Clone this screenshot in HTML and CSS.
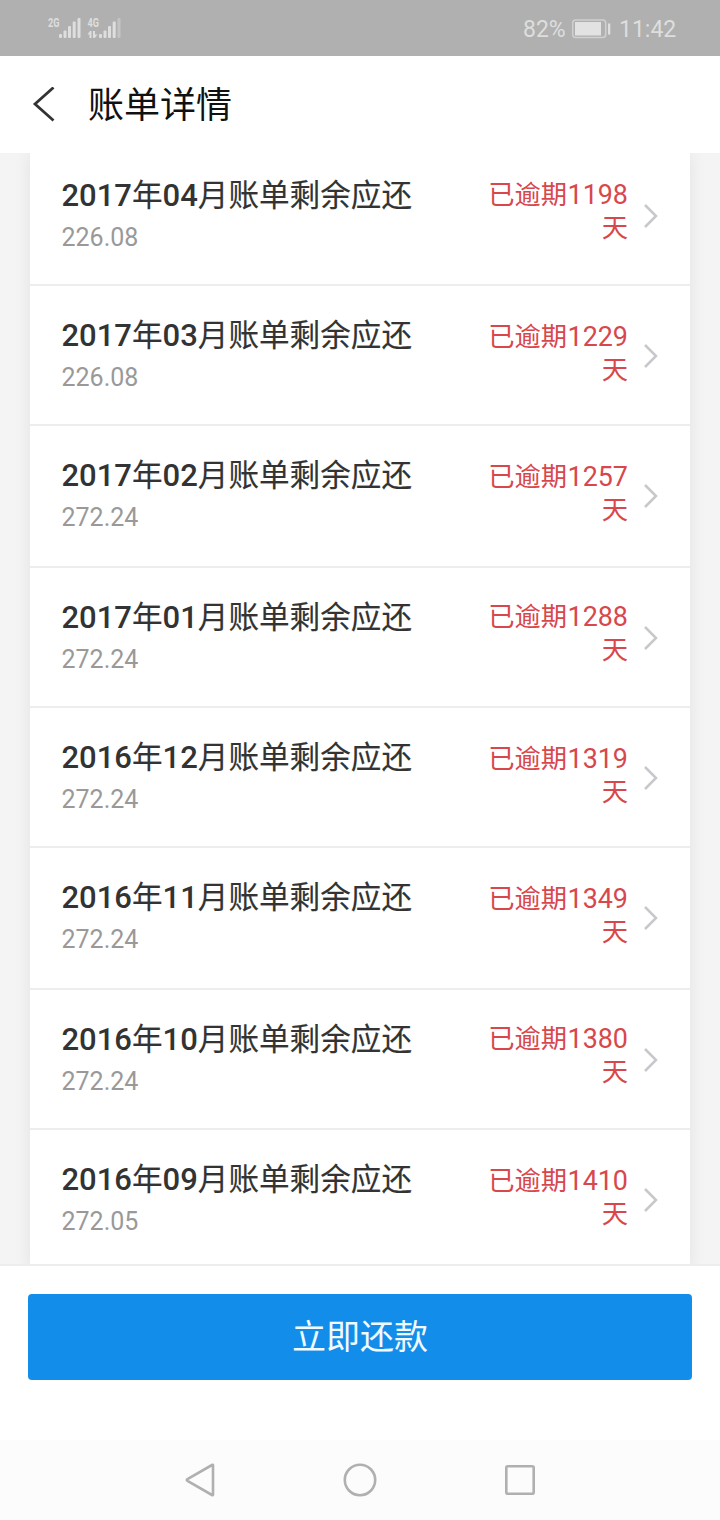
FILE: index.html
```html
<!DOCTYPE html>
<html lang="zh-CN">
<head>
<meta charset="utf-8">
<title>账单详情</title>
<link rel="stylesheet" href="styles.css">
</head>
<body>
<div class="screen">
  <div class="status">
    <svg class="signal" width="74" height="24" viewBox="0 0 74 24" fill="#dedede">
      <text class="net" x="0" y="10.500" textLength="11.500" lengthAdjust="spacingAndGlyphs">2G</text>
      <rect x="11" y="18" width="3" height="4" rx="1"/><rect x="15.500" y="14.500" width="3" height="7.500" rx="1"/><rect x="20" y="10" width="3" height="12" rx="1"/><rect x="24.700" y="5.500" width="3" height="16.500" rx="1"/><rect x="29.500" y="2" width="3" height="20" rx="1"/>
      <text class="net" x="39.500" y="10.500" textLength="11.500" lengthAdjust="spacingAndGlyphs">4G</text>
      <path d="M39.500 18.500 42 15H43.500V22H41.500V18.500ZM45 15H47V18.500H49.500L46.800 22H45Z"/>
      <rect x="51" y="18" width="3" height="4" rx="1"/><rect x="55.500" y="14.500" width="3" height="7.500" rx="1"/><rect x="60" y="10" width="3" height="12" rx="1"/><rect x="64.700" y="5.500" width="3" height="16.500" rx="1"/><rect x="69.500" y="2" width="3" height="20" rx="1" fill="#c4c4c4"/>
    </svg>
    <div class="status-right">
      <span class="percent">82%</span>
      <svg class="battery" width="40" height="20" viewBox="0 0 40 20"><rect x="1.700" y="1" width="33" height="17.500" rx="3" fill="none" stroke="#d0d0d0" stroke-width="1.500"/><rect x="4" y="3" width="26" height="13.500" fill="#e2e2e2"/><rect x="37" y="4.500" width="2.300" height="11" fill="#dedede"/></svg>
      <span class="time">11:42</span>
    </div>
  </div>
  <header class="header">
    <svg class="back" width="24" height="36" viewBox="0 0 24 36"><path d="M21.500 .5 3 17 21.500 33.500" fill="none" stroke="#333" stroke-width="2.800"/></svg>
    <h1 class="heading">账单详情</h1>
  </header>
  <main class="content">
    <div class="list">
      <div class="row first"><div class="bill"><div class="name"><b>2017</b>年<b>04</b>月账单剩余应还</div><div class="amount">226.08</div></div><div class="overdue raised">已逾期<span class="days">1198</span>天</div><svg class="chevron" width="16" height="26" viewBox="0 0 16 26"><path d="M2 2 13 13 2 24"/></svg></div>
      <div class="row"><div class="bill"><div class="name"><b>2017</b>年<b>03</b>月账单剩余应还</div><div class="amount">226.08</div></div><div class="overdue">已逾期<span class="days">1229</span>天</div><svg class="chevron" width="16" height="26" viewBox="0 0 16 26"><path d="M2 2 13 13 2 24"/></svg></div>
      <div class="row tall"><div class="bill"><div class="name"><b>2017</b>年<b>02</b>月账单剩余应还</div><div class="amount">272.24</div></div><div class="overdue">已逾期<span class="days">1257</span>天</div><svg class="chevron" width="16" height="26" viewBox="0 0 16 26"><path d="M2 2 13 13 2 24"/></svg></div>
      <div class="row"><div class="bill"><div class="name"><b>2017</b>年<b>01</b>月账单剩余应还</div><div class="amount">272.24</div></div><div class="overdue raised">已逾期<span class="days">1288</span>天</div><svg class="chevron" width="16" height="26" viewBox="0 0 16 26"><path d="M2 2 13 13 2 24"/></svg></div>
      <div class="row"><div class="bill"><div class="name"><b>2016</b>年<b>12</b>月账单剩余应还</div><div class="amount">272.24</div></div><div class="overdue">已逾期<span class="days">1319</span>天</div><svg class="chevron" width="16" height="26" viewBox="0 0 16 26"><path d="M2 2 13 13 2 24"/></svg></div>
      <div class="row tall"><div class="bill"><div class="name"><b>2016</b>年<b>11</b>月账单剩余应还</div><div class="amount">272.24</div></div><div class="overdue">已逾期<span class="days">1349</span>天</div><svg class="chevron" width="16" height="26" viewBox="0 0 16 26"><path d="M2 2 13 13 2 24"/></svg></div>
      <div class="row"><div class="bill"><div class="name"><b>2016</b>年<b>10</b>月账单剩余应还</div><div class="amount">272.24</div></div><div class="overdue raised">已逾期<span class="days">1380</span>天</div><svg class="chevron" width="16" height="26" viewBox="0 0 16 26"><path d="M2 2 13 13 2 24"/></svg></div>
      <div class="row"><div class="bill"><div class="name"><b>2016</b>年<b>09</b>月账单剩余应还</div><div class="amount">272.05</div></div><div class="overdue">已逾期<span class="days">1410</span>天</div><svg class="chevron" width="16" height="26" viewBox="0 0 16 26"><path d="M2 2 13 13 2 24"/></svg></div>
    </div>
  </main>
  <footer class="footer"><button class="pay">立即还款</button></footer>
  <nav class="nav">
    <svg width="40" height="40" viewBox="0 0 40 40"><path d="M33 5.300V34.700Q33 35.500 32 35L7.500 21Q6 20 7.500 19L32 5Q33 4.500 33 5.300Z"/></svg>
    <svg width="40" height="40" viewBox="0 0 40 40"><circle cx="20" cy="20" r="15.200"/></svg>
    <svg width="40" height="40" viewBox="0 0 40 40"><rect x="6.300" y="6.300" width="27.400" height="27.400" rx="1.500"/></svg>
  </nav>
</div>
</body>
</html>
```
FILE: styles.css
```css
* { box-sizing: border-box; }
body { margin: 0; background: #fff; font-family: Roboto, "Noto Sans CJK SC", sans-serif; }
svg { display: block; flex: none; }
.screen { width: 720px; height: 1520px; display: flex; flex-direction: column; overflow: hidden; }
.status { height: 56px; flex: none; background: #b0b0b0; display: flex; justify-content: space-between; padding: 0 44px 0 48px; }
.signal { margin-top: 16px; }
.net { font: bold 12.500px Roboto, sans-serif; }
.status-right { display: flex; align-items: center; color: #dedede; font-size: 23px; line-height: 58px; padding-top: 3px; }
.percent { width: 48px; }
.battery { margin-top: -2px; margin-right: 8px; }
.time { width: 57px; white-space: nowrap; }
.header { height: 97px; flex: none; display: flex; align-items: center; padding-left: 32px; background: #fff; }
.back { margin-right: 32px; }
.heading { margin: 0; padding-top: 3px; font-size: 36px; line-height: 50px; font-weight: 400; color: #111; }
.content { height: 1111px; flex: none; overflow: hidden; background: #f4f4f4; padding: 0 30px; }
.list { background: #fff; box-shadow: 0 0 16px rgba(0, 0, 0, .08); }
.row { height: 140px; display: flex; padding: 0 32px; border-bottom: 2px solid #ededed; }
.row.first { height: 133px; }
.row.first > * { transform: translateY(-7px); }
.row.tall { height: 142px; }
.bill { flex: 1; padding-top: 29px; white-space: nowrap; }
.name { margin-left: -.5px; font-size: 30.600px; line-height: 42px; font-weight: 400; color: #333; -webkit-text-stroke: .15px #333; }
.name b { font-size: 31px; font-weight: 500; -webkit-text-stroke: 0; }
.amount { margin-left: -.5px; font-size: 25px; line-height: 42px; color: #999; }
.overdue { width: 150px; padding-top: 35px; font-size: 26.300px; line-height: 33px; color: #d8474c; text-align: right; word-break: break-all; font-weight: 400; }
.overdue.raised { padding-top: 33px; }
.days { display: inline-block; font-size: 28px; line-height: 1; transform: scaleX(.96); transform-origin: right; margin-left: -2px; }
.chevron { margin: 57px -1px 0 15px; fill: none; stroke: #c7c7cc; stroke-width: 2.500; }
.footer { height: 176px; flex: none; border-top: 2px solid #ededed; padding: 28px; background: #fff; }
.pay { display: block; width: 100%; height: 86px; padding: 1px 0 0; border: 0; border-radius: 4px; background: #128eea; color: #f0faff; font: 400 34px/85px Roboto, "Noto Sans CJK SC", sans-serif; }
.nav { height: 80px; flex: none; display: flex; justify-content: center; align-items: center; gap: 120px; background: #fcfcfc; fill: none; stroke: #b0b0b0; stroke-width: 2.600; }
```
